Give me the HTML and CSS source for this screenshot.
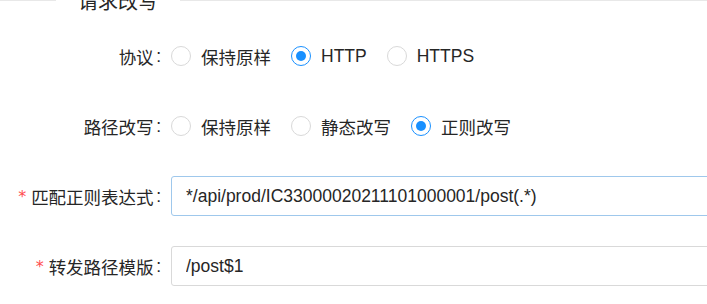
FILE: index.html
```html
<!DOCTYPE html>
<html lang="zh-CN">
<head>
  <meta charset="UTF-8">
  <meta name="viewport" content="width=device-width, initial-scale=1.0">
  <title>请求改写</title>
  <link rel="stylesheet" href="styles.css">
</head>
<body>
  <div class="divider">
    <span class="divider-text">请求改写</span>
  </div>

  <form class="rewrite-form">
    <div class="form-row">
      <label class="form-label">协议</label>
      <div class="radio-group">
        <label class="radio"><span class="radio-dot"></span><span class="radio-text">保持原样</span></label>
        <label class="radio checked"><span class="radio-dot"></span><span class="radio-text">HTTP</span></label>
        <label class="radio"><span class="radio-dot"></span><span class="radio-text">HTTPS</span></label>
      </div>
    </div>

    <div class="form-row">
      <label class="form-label">路径改写</label>
      <div class="radio-group">
        <label class="radio"><span class="radio-dot"></span><span class="radio-text">保持原样</span></label>
        <label class="radio"><span class="radio-dot"></span><span class="radio-text">静态改写</span></label>
        <label class="radio checked"><span class="radio-dot"></span><span class="radio-text">正则改写</span></label>
      </div>
    </div>

    <div class="form-row">
      <label class="form-label required">匹配正则表达式</label>
      <input class="text-input focused" type="text" value="*/api/prod/IC33000020211101000001/post(.*)">
    </div>

    <div class="form-row">
      <label class="form-label required">转发路径模版</label>
      <input class="text-input" type="text" value="/post$1">
    </div>
  </form>
</body>
</html>
```

FILE: styles.css
```css
body {
  margin: 0;
  background-color: #fff;
  color: #262626;
  font-family: "Liberation Sans", "Noto Sans CJK SC", sans-serif;
  font-size: 17.5px;
  overflow: hidden;
}

.divider {
  display: flex;
  align-items: center;
  height: 28px;
  margin-top: -14px;
  font-size: 20px;
  white-space: nowrap;
}

.divider::before,
.divider::after {
  content: "";
  border-top: 1px solid #e8e8e8;
}

.divider::before {
  width: 56px;
}

.divider::after {
  flex: 1;
}

.divider-text {
  padding: 0 22px;
}

.rewrite-form {
  margin-top: 22px;
}

.form-row {
  display: flex;
  align-items: center;
  height: 40px;
  margin-bottom: 30px;
}

.form-label {
  width: 171px;
  flex-shrink: 0;
  display: flex;
  justify-content: flex-end;
  align-items: center;
  padding-right: 10px;
  box-sizing: border-box;
  white-space: nowrap;
}

.form-label::after {
  content: ":";
  margin-left: 2.5px;
}

.form-label.required::before {
  content: "*";
  color: #ff4d4f;
  margin-right: 5px;
  font-family: "DejaVu Sans", sans-serif;
  font-size: 16px;
}

.radio-group {
  display: flex;
  align-items: center;
}

.radio {
  display: flex;
  align-items: center;
  margin-right: 10px;
  cursor: pointer;
}

.radio-dot {
  width: 20px;
  height: 20px;
  border: 1px solid #d9d9d9;
  border-radius: 50%;
  box-sizing: border-box;
  display: flex;
  align-items: center;
  justify-content: center;
}

.radio.checked .radio-dot {
  border-color: #1890ff;
}

.radio.checked .radio-dot::after {
  content: "";
  width: 10px;
  height: 10px;
  border-radius: 50%;
  background-color: #1890ff;
}

.radio-text {
  padding: 0 10px;
}

.text-input {
  width: 600px;
  height: 40px;
  flex-shrink: 0;
  padding: 0 14px;
  border: 1px solid #d9d9d9;
  border-radius: 3px;
  box-sizing: border-box;
  font-family: inherit;
  font-size: 17.5px;
  color: #262626;
  outline: none;
}

.text-input.focused {
  border-color: #9fc8ec;
}
```
